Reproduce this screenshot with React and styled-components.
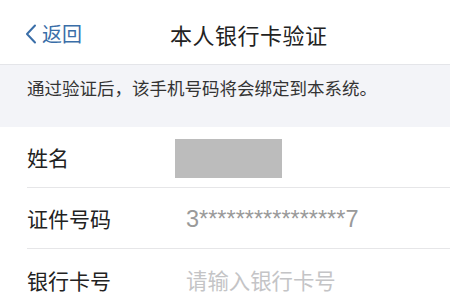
import React from "react";
import styled, { createGlobalStyle } from "styled-components";

const Global = createGlobalStyle`
  html, body { margin: 0; padding: 0; background: #fff; }
  body { font-family: "Noto Sans CJK SC", "Liberation Sans", sans-serif; width: 450px; height: 300px; overflow: hidden; }
`;

const Header = styled.header`
  height: 65px;
  display: grid;
  grid-template-columns: 170px auto 1fr;
  align-items: center;
  background: #fff;
  border-bottom: 1px solid #e4e5e9;
  box-sizing: border-box;
`;

const Back = styled.div`
  display: flex;
  align-items: center;
  padding-left: 25px;
  color: #3a6ea8;
  font-size: 20px;
  gap: 5px;
  line-height: 1;
  padding-top: 3px;
`;

const Title = styled.div`
  font-size: 22px;
  color: #222;
  letter-spacing: 0.5px;
  line-height: 1;
  padding-top: 3px;
`;

const Notice = styled.div`
  height: 62px;
  background: #f3f4f8;
  display: flex;
  align-items: flex-start;
  padding: 10px 0 0 27px;
  box-sizing: border-box;
  font-size: 17.5px;
  color: #333;
`;

const Form = styled.div`
  padding-left: 27px;
`;

const Row = styled.div`
  height: 61px;
  display: flex;
  align-items: center;
  border-bottom: ${(p) => (p.$last ? "none" : "1px solid #e6e6e8")};
  box-sizing: border-box;
`;

const Label = styled.div`
  width: 159px;
  flex: none;
  font-size: 21px;
  color: #222;
`;

const Value = styled.div`
  font-size: 23.5px;
  color: #9a9a9a;
  font-family: "Liberation Sans", sans-serif;
  padding-top: 2px;
`;

const Placeholder = styled.div`
  font-size: 21.4px;
  color: #c4c4c6;
`;

const Redacted = styled.div`
  width: 107px;
  height: 39px;
  background: #bcbcbc;
  margin-left: -11px;
  margin-top: 2px;
`;

export default function App() {
  return (
    <>
      <Global />
      <Header>
        <Back>
          <svg width="12" height="20" viewBox="0 0 12 20">
            <path d="M10 1.5 L2 10 L10 18.5" fill="none" stroke="#3a6ea8" strokeWidth="2" strokeLinecap="round" strokeLinejoin="round" />
          </svg>
          <span>返回</span>
        </Back>
        <Title>本人银行卡验证</Title>
        <div />
      </Header>
      <Notice>通过验证后，该手机号码将会绑定到本系统。</Notice>
      <Form>
        <Row>
          <Label>姓名</Label>
          <Redacted />
        </Row>
        <Row>
          <Label>证件号码</Label>
          <Value>3****************7</Value>
        </Row>
        <Row $last>
          <Label>银行卡号</Label>
          <Placeholder>请输入银行卡号</Placeholder>
        </Row>
      </Form>
    </>
  );
}
